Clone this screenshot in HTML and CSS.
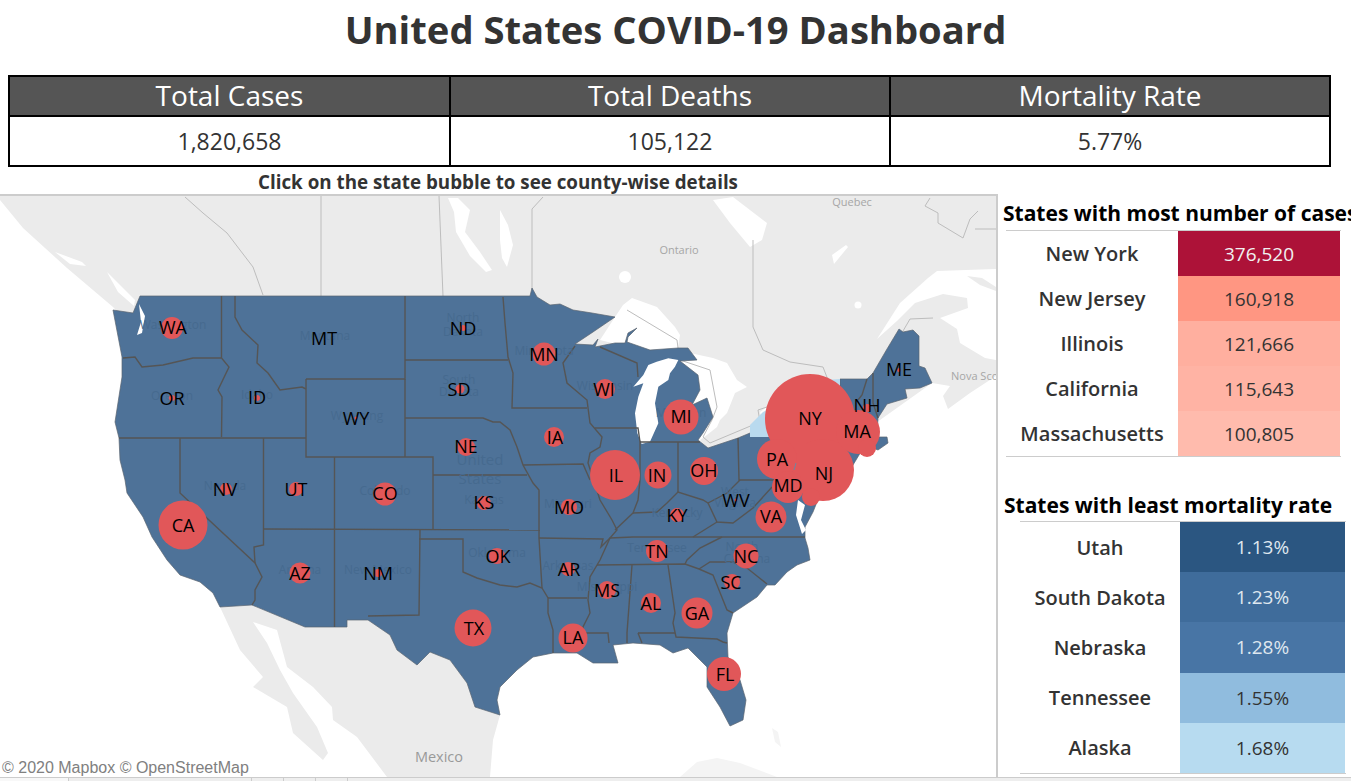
FILE: index.html
```html
<!DOCTYPE html>
<html lang="en">
<head>
<meta charset="UTF-8" />
<meta name="viewport" content="width=device-width, initial-scale=1" />
<title>United States COVID-19 Dashboard</title>
<link rel="stylesheet" href="styles.css">
</head>
<body>
  <h1 class="title">United States COVID-19 Dashboard</h1>

  <section class="kpi-table" aria-label="National totals">
    <div class="kpi-head">Total Cases</div>
    <div class="kpi-head">Total Deaths</div>
    <div class="kpi-head">Mortality Rate</div>
    <div class="kpi-value">1,820,658</div>
    <div class="kpi-value">105,122</div>
    <div class="kpi-value">5.77%</div>
  </section>

  <p class="hint">Click on the state bubble to see county-wise details</p>

  <main class="dashboard">
    <div class="map-pane">
      <svg class="map" viewBox="0 196 996 581" aria-label="Map of the United States with case bubbles">
        <!-- land outside the US -->
        <polygon class="land" points="0,196 996,196 996,376 970,393 948,409 943,396 950,386 932,383 880,420 700,500 300,500 113,307 67,268 23,228 0,200" />
        <polygon class="water" points="995,269 937,271 928,278 900,303 877,339 897,321 915,303 943,294 967,298 968,308 940,318 957,329 960,343 985,358 996,360 996,269" />
        <polygon class="land" points="967,276 982,278 996,287 996,291 980,285" />
        <polygon class="water" points="615,317 623,305 632,298 657,307 675,327 680,335 678,348 690,353 713,358 727,363 737,380 747,387 735,393 733,398 727,413 720,420 717,427 707,435 700,440 708,450 750,440 763,425 760,412 767,407 775,405 775,430 740,448 700,450 680,400 640,350 600,340" />
        <polygon class="water" points="448,198 458,198 470,210 465,232 480,252 492,270 486,272 470,256 456,232 454,212" />
        <polygon class="water" points="500,210 508,225 513,245 507,267 502,258 500,240" />
        <polygon class="water" points="713,200 733,197 767,223 762,240 750,247 730,223" />
        <polygon class="water" points="832,255 846,245 848,247 834,264" />
        <polygon class="water" points="55,252 82,262 86,266 70,264" />
        <polygon class="water" points="107,272 135,300 134,306 118,292" />
        <circle class="water" cx="625" cy="277" r="6" />
        <circle class="water" cx="858" cy="305" r="3.5" />
        <polygon class="land" points="220,607 252,605 305,627 347,627 347,620 368,620 390,635 397,650 417,665 430,652 450,660 467,683 475,707 500,715 493,740 490,777 387,777 357,737 333,720 332,707 313,687 287,667 277,630 253,622 267,643 280,670 293,693 317,727 328,753 323,760 293,733 287,707 253,687 263,677 240,650" />
        <polygon class="land-faint" points="680,777 697,762 717,758 740,763 777,777" />
        <polygon class="land-faint" points="772,728 778,732 781,747 775,742" />

        <!-- province and sea borders -->
        <polyline class="boundary" points="185,197 203,213 227,233 253,267 263,295" />
        <polyline class="boundary" points="321,196 321,296" />
        <polyline class="boundary" points="439,196 443,296" />
        <polyline class="boundary" points="543,197 532,209 532,290" />
        <polyline class="boundary" points="753,240 753,327 763,350 790,362 823,367 828,380" />
        <polyline class="boundary" points="903,331 910,319 933,318" />
        <polyline class="boundary" points="930,198 925,206 938,213 938,223 963,238 970,219 978,211" />
        <polyline class="boundary" points="975,229 996,229" />
        <polyline class="boundary" points="627,310 677,340 678,348" />
        <polyline class="boundary" points="680,360 710,370 717,407 712,420 703,437 710,443 760,422 758,410 767,407" />

        <!-- states -->
        <polygon class="us" points="140,296 530,296 532,288 537,297 550,305 560,304 573,310 592,313 615,317 593,332 575,344 593,345 598,339 595,347 615,343 625,343 628,333 637,328 628,337 627,342 650,350 678,348 688,348 697,360 680,361 698,375 700,390 692,405 707,398 713,417 703,433 698,440 708,448 738,438 750,433 840,400 840,379 867,379 873,373 887,349 899,329 903,332 913,330 919,336 919,366 925,368 932,383 920,388 905,389 907,398 887,404 878,418 877,437 887,437 888,443 878,450 865,445 850,470 817,502 813,512 805,527 805,538 808,548 810,560 797,565 787,572 775,585 767,585 757,597 733,613 727,633 728,657 740,680 746,700 743,720 730,726 720,707 707,687 707,667 688,648 673,653 660,645 633,643 613,645 618,663 593,663 577,653 553,653 533,657 517,670 500,687 497,700 500,715 475,707 467,683 450,660 430,652 417,665 397,650 390,635 368,620 347,620 347,627 305,627 252,605 220,607 213,593 200,582 180,575 167,560 152,537 143,517 127,493 125,480 120,460 119,438 115,422 122,377 122,357 113,310 133,313" />
        <polygon class="ny" points="750,437 750,425 763,412 826,380 840,379 840,437" />
        <polygon class="water" points="220,290 250,255 265,225 290,215 325,205 355,210 345,230 330,250 325,270 295,290 285,340 295,400 270,455 245,462 232,430 225,370 235,320 250,280" transform="translate(560 290) scale(0.3333)" />
        <polygon class="water" points="139,304 145,316 142,333 137,335 141,322" />
        <polygon class="water" points="798,500 805,505 801,520 806,530 802,534 796,515" />
        <g class="borders">
          <polyline points="221.5,296 221.5,358 229,367 218,390 222,397 221.5,437" />
          <polyline points="123,358 135,357 142,367 163,365 193,358 221,358" />
          <polyline points="235,296 235,317 242,330 258,345 257,363 268,373 280,390 302,387 306,389" />
          <polyline points="306,379 405,379 405,296" />
          <polyline points="306,379 306,457 433,457 433,529" />
          <polyline points="405,379 405,457" />
          <polyline points="405,360 508,360" />
          <polyline points="405,418 483,418 493,422 500,422 510,430 517,447 523,465 533,483 539,490 539,530" />
          <polyline points="503,297 505,323 508,357 513,373 512,408 587,408" />
          <polyline points="575,346 563,363 567,383 587,400 590,423 602,437 600,447 590,453 588,463 600,500 612,520 617,530 610,538" />
          <polyline points="595,428 638,428 640,442 640,480 638,500 633,513" />
          <polyline points="600,347 637,363 638,377" />
          <polyline points="523,465 583,464 590,480" />
          <polyline points="433,475 527,475" />
          <polyline points="119,438 306,438" />
          <polyline points="180,438 180,493 255,563 262,577 255,590 255,600 252,605" />
          <polyline points="263.5,438 263.5,545 254,547 255,563" />
          <polyline points="334.5,457 334.5,627" />
          <polyline points="263,529 540,530" />
          <polyline points="420,530 419,615 368,616" />
          <polyline points="419,539 463,539 463,572 477,578 500,585 517,587 530,583 542,588 548,598 548,613 553,630 553,653" />
          <polyline points="539,538 603,539 601,547 610,538 633,537 722,537 805,537" />
          <polyline points="539,530 539,538 542,588" />
          <polyline points="610,538 600,560 590,577 588,600 590,613 583,627 583,633 608,633 609,643" />
          <polyline points="548,598 587,598" />
          <polyline points="597,565 685,564 699,569 713,575 727,610 733,613" />
          <polyline points="722,537 700,548 687,560 685,564" />
          <polyline points="699,569 710,562 733,562 747,568 767,584" />
          <polyline points="632,565 627,633 627,643" />
          <polyline points="668,565 675,613 673,623 676,637 717,639 723,642 727,643" />
          <polyline points="638,633 675,633" />
          <polyline points="638,633 642,643" />
          <polyline points="633,513 657,512 667,503 678,492 703,500 708,503 727,493 740,480" />
          <polyline points="633,513 615,530" />
          <polyline points="678,442 678,492" />
          <polyline points="640,442 700,442" />
          <polyline points="738,438 739,480 777,480" />
          <polyline points="708,503 717,522 733,523 753,508 772,487" />
          <polyline points="717,522 693,537" />
          <polyline points="873,373 873,403 878,418" />
          <polyline points="867,379 862,395 858,400" />
        </g>

        <!-- faint basemap names -->
        <g class="place">
          <text x="173" y="329">Washington</text>
          <text x="172" y="400">Oregon</text>
          <text x="257" y="399">Idaho</text>
          <text x="325" y="340">Montana</text>
          <text x="357" y="420">Wyoming</text>
          <text x="463" y="322">North</text>
          <text x="463" y="336">Dakota</text>
          <text x="459" y="384">South</text>
          <text x="459" y="396">Dakota</text>
          <text x="225" y="490">Nevada</text>
          <text x="385" y="495">Colorado</text>
          <text x="300" y="574">Arizona</text>
          <text x="378" y="574">New Mexico</text>
          <text x="497" y="557">Oklahoma</text>
          <text x="484" y="504">Kansas</text>
          <text x="544" y="355">Minnesota</text>
          <text x="605" y="390">Wisconsin</text>
          <text x="681" y="417">Michigan</text>
          <text x="568" y="508">Missouri</text>
          <text x="568" y="570">Arkansas</text>
          <text x="607" y="591">Mississippi</text>
          <text x="657" y="552">Tennessee</text>
          <text x="677" y="517">Kentucky</text>
          <text x="735" y="496">West</text>
          <text x="735" y="507">Virginia</text>
          <text x="742" y="551">North</text>
          <text x="747" y="563">Carolina</text>
          <text x="764" y="460">Pe</text>
          <text class="place-big" x="480" y="465">United</text>
          <text class="place-big" x="480" y="484">States</text>
        </g>

        <!-- bubbles, big ones first -->
        <g class="bubbles">
          <circle cx="810" cy="419" r="45" />
          <circle cx="823" cy="470" r="31" />
          <circle cx="858" cy="432" r="22" />
          <circle cx="777" cy="459" r="20" />
          <circle cx="788" cy="487" r="16" />
          <circle cx="811" cy="497" r="9" />
          <circle cx="867" cy="448" r="9" />
          <circle cx="615" cy="475" r="25" />
          <circle cx="183" cy="525" r="24.5" />
          <circle cx="473" cy="628" r="18.5" />
          <circle cx="681" cy="417" r="17.5" />
          <circle cx="724" cy="674" r="17" />
          <circle cx="771" cy="517" r="15.5" />
          <circle cx="697" cy="613" r="15.5" />
          <circle cx="573" cy="638" r="14.5" />
          <circle cx="704" cy="471" r="14" />
          <circle cx="658" cy="475" r="13.5" />
          <circle cx="746" cy="556" r="12.5" />
          <circle cx="544" cy="354" r="11.5" />
          <circle cx="385" cy="494" r="11.5" />
          <circle cx="172" cy="328" r="11" />
          <circle cx="657" cy="551" r="11" />
          <circle cx="300" cy="573" r="10.5" />
          <circle cx="605" cy="389" r="10" />
          <circle cx="554" cy="437" r="10" />
          <circle cx="651" cy="603" r="10" />
          <circle cx="466" cy="447" r="9" />
          <circle cx="607" cy="590" r="9" />
          <circle cx="732" cy="582" r="8" />
          <circle cx="569" cy="507" r="8" />
          <circle cx="497" cy="556" r="8" />
          <circle cx="677" cy="515" r="7" />
          <circle cx="568" cy="569" r="7" />
          <circle cx="484" cy="503" r="7" />
          <circle cx="296" cy="489" r="7" />
          <circle cx="226" cy="489" r="6" />
          <circle cx="460" cy="389" r="4.5" />
          <circle cx="378" cy="573" r="4" />
          <circle cx="172" cy="398" r="3" />
          <circle cx="257" cy="398" r="3" />
          <circle cx="463" cy="328" r="3" />
          <circle cx="867" cy="408" r="4" />
          <circle cx="356" cy="418" r="1.5" />
          <circle cx="899" cy="370" r="2" />
          <circle cx="736" cy="500" r="1.5" />
        </g>
        <line class="bubble-gap" x1="796" y1="463" x2="794" y2="470" />

        <g class="state-code">
          <text x="173" y="334">WA</text>
          <text x="172" y="405">OR</text>
          <text x="257" y="404">ID</text>
          <text x="324" y="345">MT</text>
          <text x="356" y="425">WY</text>
          <text x="463" y="335">ND</text>
          <text x="459" y="396">SD</text>
          <text x="466" y="453">NE</text>
          <text x="225" y="496">NV</text>
          <text x="296" y="496">UT</text>
          <text x="385" y="500">CO</text>
          <text x="183" y="532">CA</text>
          <text x="300" y="580">AZ</text>
          <text x="378" y="580">NM</text>
          <text x="484" y="509">KS</text>
          <text x="498" y="563">OK</text>
          <text x="474" y="635">TX</text>
          <text x="544" y="361">MN</text>
          <text x="604" y="396">WI</text>
          <text x="555" y="444">IA</text>
          <text x="616" y="482">IL</text>
          <text x="657" y="482">IN</text>
          <text x="704" y="477">OH</text>
          <text x="681" y="423">MI</text>
          <text x="569" y="514">MO</text>
          <text x="569" y="576">AR</text>
          <text x="607" y="597">MS</text>
          <text x="573" y="644">LA</text>
          <text x="651" y="610">AL</text>
          <text x="657" y="558">TN</text>
          <text x="677" y="522">KY</text>
          <text x="736" y="507">WV</text>
          <text x="771" y="523">VA</text>
          <text x="746" y="563">NC</text>
          <text x="731" y="589">SC</text>
          <text x="697" y="620">GA</text>
          <text x="725" y="681">FL</text>
          <text x="788" y="492">MD</text>
          <text x="777" y="466">PA</text>
          <text x="824" y="480">NJ</text>
          <text x="810" y="425">NY</text>
          <text x="857" y="438">MA</text>
          <text x="867" y="412">NH</text>
          <text x="899" y="376">ME</text>
        </g>

        <text class="region" x="679" y="254">Ontario</text>
        <text class="region" x="852" y="206">Quebec</text>
        <text class="region region-left" x="951" y="380">Nova Scotia</text>
        <text class="region region-big" x="439" y="762">Mexico</text>
        <text class="credit" x="2" y="773">© 2020 Mapbox © OpenStreetMap</text>
      </svg>
    </div>

    <aside class="side">
      <section class="rank rank-cases">
        <h2>States with most number of cases</h2>
        <div class="rank-table">
          <div class="rank-name">New York</div><div class="rank-num red-1">376,520</div>
          <div class="rank-name">New Jersey</div><div class="rank-num red-2">160,918</div>
          <div class="rank-name">Illinois</div><div class="rank-num red-3">121,666</div>
          <div class="rank-name">California</div><div class="rank-num red-4">115,643</div>
          <div class="rank-name">Massachusetts</div><div class="rank-num red-5">100,805</div>
        </div>
      </section>

      <section class="rank rank-mortality">
        <h2>States with least mortality rate</h2>
        <div class="rank-table">
          <div class="rank-name">Utah</div><div class="rank-num blue-1">1.13%</div>
          <div class="rank-name">South Dakota</div><div class="rank-num blue-2">1.23%</div>
          <div class="rank-name">Nebraska</div><div class="rank-num blue-3">1.28%</div>
          <div class="rank-name">Tennessee</div><div class="rank-num blue-4">1.55%</div>
          <div class="rank-name">Alaska</div><div class="rank-num blue-5">1.68%</div>
        </div>
      </section>
    </aside>
  </main>

  <div class="tab-strip">
    <span class="tab tab-active"></span>
    <span class="tab tab-wide"></span>
    <span class="tab"></span>
    <span class="tab"></span>
    <span class="tab"></span>
  </div>
</body>
</html>
```

FILE: styles.css
```css
/* Reset & base */
*, *::before, *::after {
  box-sizing: border-box;
}

html, body {
  height: 100%;
}

body {
  margin: 0;
  background: #fff;
  color: #333;
  font-family: 'Open Sans', 'Noto Sans', sans-serif;
  overflow: hidden;
}

.title {
  margin: 0;
  height: 75px;
  padding-top: 4px;
  font-size: 38.2px;
  line-height: 50px;
  font-weight: 700;
  text-align: center;
}

/* KPI table */
.kpi-table {
  display: grid;
  grid-template-columns: 441px 440px 440px;
  grid-template-rows: 40px 50px;
  margin-left: 8px;
  width: 1323px;
  border-top: 2px solid #000;
  border-left: 2px solid #000;
}

.kpi-head,
.kpi-value {
  display: flex;
  align-items: center;
  justify-content: center;
  border-right: 2px solid #000;
  border-bottom: 2px solid #000;
}

.kpi-head {
  background: #555;
  color: #fff;
  font-size: 28px;
  padding-bottom: 2px;
}

.kpi-value {
  font-size: 23px;
  color: #333;
}

.hint {
  margin: 0;
  width: 996px;
  height: 27px;
  font-size: 18.8px;
  line-height: 30px;
  font-weight: 700;
  text-align: center;
}

/* Map + side tables */
.dashboard {
  display: flex;
  height: 583px;
}

.map-pane {
  width: 998px;
  border-top: 2px solid #ccc;
  border-right: 2px solid #ccc;
}

.map {
  display: block;
  width: 996px;
  height: 581px;
}

.land { fill: #ebebeb; }
.land-faint { fill: #f4f4f4; }
.water { fill: #fff; }

.us {
  fill: #4e7298;
  stroke: #5a6470;
  stroke-width: 0.7;
}

.ny { fill: #b9daef; }

.boundary {
  fill: none;
  stroke: #bdbdbd;
  stroke-width: 1;
}

.borders polyline {
  fill: none;
  stroke: #555;
  stroke-width: 1.4;
}

.place text {
  fill: #466a8f;
  font-size: 12px;
  text-anchor: middle;
}

.place .place-big {
  font-size: 15px;
}

.bubbles circle {
  fill: #e15759;
}

.bubble-gap {
  stroke: #6d87a3;
  stroke-width: 1;
}

.state-code text {
  fill: #000;
  font-size: 18px;
  text-anchor: middle;
}

.region {
  fill: #a6a6a6;
  font-size: 11px;
  text-anchor: middle;
}

.region-left {
  text-anchor: start;
}

.region-big {
  font-size: 14.5px;
  fill: #999;
}

.credit {
  fill: #808080;
  font-family: 'Liberation Sans', sans-serif;
  font-size: 16px;
}

.side {
  flex: 1;
  min-width: 0;
}

/* Ranked tables */
.rank h2 {
  margin: 0;
  color: #000;
  font-size: 21px;
  font-weight: 700;
  white-space: nowrap;
}

.rank-table {
  display: grid;
  border-top: 1px solid #ccc;
  border-bottom: 1px solid #ccc;
}

.rank-name,
.rank-num {
  display: flex;
  align-items: center;
  justify-content: center;
}

.rank-name {
  font-size: 20px;
  font-weight: 600;
  color: #333;
}

.rank-num {
  font-size: 19px;
  font-weight: 400;
  color: #333;
}

.rank-cases {
  padding: 5px 0 0 5px;
}

.rank-cases h2 {
  height: 31px;
  line-height: 29px;
}

.rank-cases .rank-table {
  grid-template-columns: 172px 162px;
  grid-auto-rows: 45px;
  margin-left: 3px;
  width: 335px;
}

.rank-mortality {
  padding: 34px 0 0 6px;
}

.rank-mortality h2 {
  height: 30px;
  line-height: 29px;
}

.rank-mortality .rank-table {
  grid-template-columns: 160px 165px;
  grid-auto-rows: 50.2px;
  margin-left: 16px;
  width: 326px;
}

.red-1 { background: #ad1238; color: #f1f1f1; }
.red-2 { background: #ff9682; }
.red-3 { background: #ffaf9f; }
.red-4 { background: #ffb3a4; }
.red-5 { background: #ffbbad; }

.blue-1 { background: #2b5681; color: #dfe7ef; }
.blue-2 { background: #3f6c9b; color: #dfe7ef; }
.blue-3 { background: #4875a5; color: #dfe7ef; }
.blue-4 { background: #90bcde; }
.blue-5 { background: #b7dbf0; }

/* Bottom sheet tabs */
.tab-strip {
  display: flex;
  height: 10px;
  background: #eee;
  border-top: 1px solid #ccc;
}

.tab {
  width: 32px;
  border-right: 1px solid #ccc;
}

.tab-active {
  width: 69px;
  background: #f8f8f8;
}

.tab-wide {
  width: 183px;
}
```
